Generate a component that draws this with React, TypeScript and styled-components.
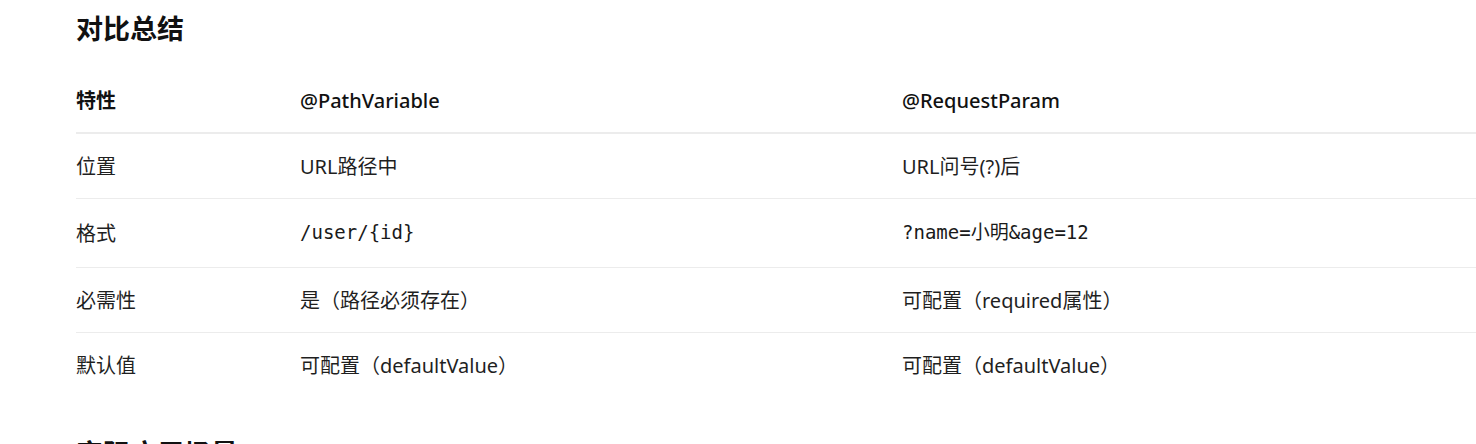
import React from 'react';
import styled, { createGlobalStyle } from 'styled-components';

const GlobalStyle = createGlobalStyle`
  html, body {
    margin: 0;
    padding: 0;
    background: #fff;
    overflow: hidden;
  }
  body {
    font-family: "Noto Sans", "Noto Sans CJK SC", sans-serif;
    color: #1f1f1f;
  }
`;

const Page = styled.div`
  padding: 10px 0 0 76px;
  width: 1500px;
`;

const Heading = styled.h2`
  margin: 0 0 20px;
  font-size: 27px;
  line-height: 38px;
  font-weight: 700;
  color: #111;
`;

const Table = styled.table`
  border-collapse: collapse;
  table-layout: fixed;
  width: 1428px;
  font-size: 20px;
  margin-bottom: 38px;
`;

const HeadCell = styled.th<{ $strong?: boolean }>`
  text-align: left;
  padding: 17px 0 15px;
  line-height: 32px;
  font-weight: ${(p) => (p.$strong ? 700 : 500)};
  color: #111;
  border-bottom: 2px solid #ececec;
`;

const Row = styled.tr`
  border-bottom: 1px solid #ececec;

  &:last-child {
    border-bottom: none;
  }
`;

const Cell = styled.td`
  padding: 17px 0 15px;
  line-height: 32px;
  vertical-align: middle;
`;

// inline code is a little taller than plain text, which makes its row taller too
const Code = styled.code`
  display: inline-block;
  padding: 0 0 4px;
  font-family: "DejaVu Sans Mono", "Noto Sans CJK SC", monospace;
  font-size: 19px;
  line-height: 32px;
  color: #1a1a1a;
`;

interface IRow {
  name: string;
  path: React.ReactNode;
  param: React.ReactNode;
}

const rows: IRow[] = [
  { name: '位置', path: 'URL路径中', param: 'URL问号(?)后' },
  {
    name: '格式',
    path: <Code>/user/{'{id}'}</Code>,
    param: <Code>?name=小明&amp;age=12</Code>,
  },
  { name: '必需性', path: '是（路径必须存在）', param: '可配置（required属性）' },
  { name: '默认值', path: '可配置（defaultValue）', param: '可配置（defaultValue）' },
];

const App = () => {
  return (
    <Page>
      <GlobalStyle />
      <Heading>对比总结</Heading>
      <Table>
        <colgroup>
          <col style={{ width: 224 }} />
          <col style={{ width: 602 }} />
          <col style={{ width: 602 }} />
        </colgroup>
        <thead>
          <tr>
            <HeadCell $strong>特性</HeadCell>
            <HeadCell>@PathVariable</HeadCell>
            <HeadCell>@RequestParam</HeadCell>
          </tr>
        </thead>
        <tbody>
          {rows.map((row) => (
            <Row key={row.name}>
              <Cell>{row.name}</Cell>
              <Cell>{row.path}</Cell>
              <Cell>{row.param}</Cell>
            </Row>
          ))}
        </tbody>
      </Table>
      <Heading>实际应用场景</Heading>
    </Page>
  );
};

export default App;
